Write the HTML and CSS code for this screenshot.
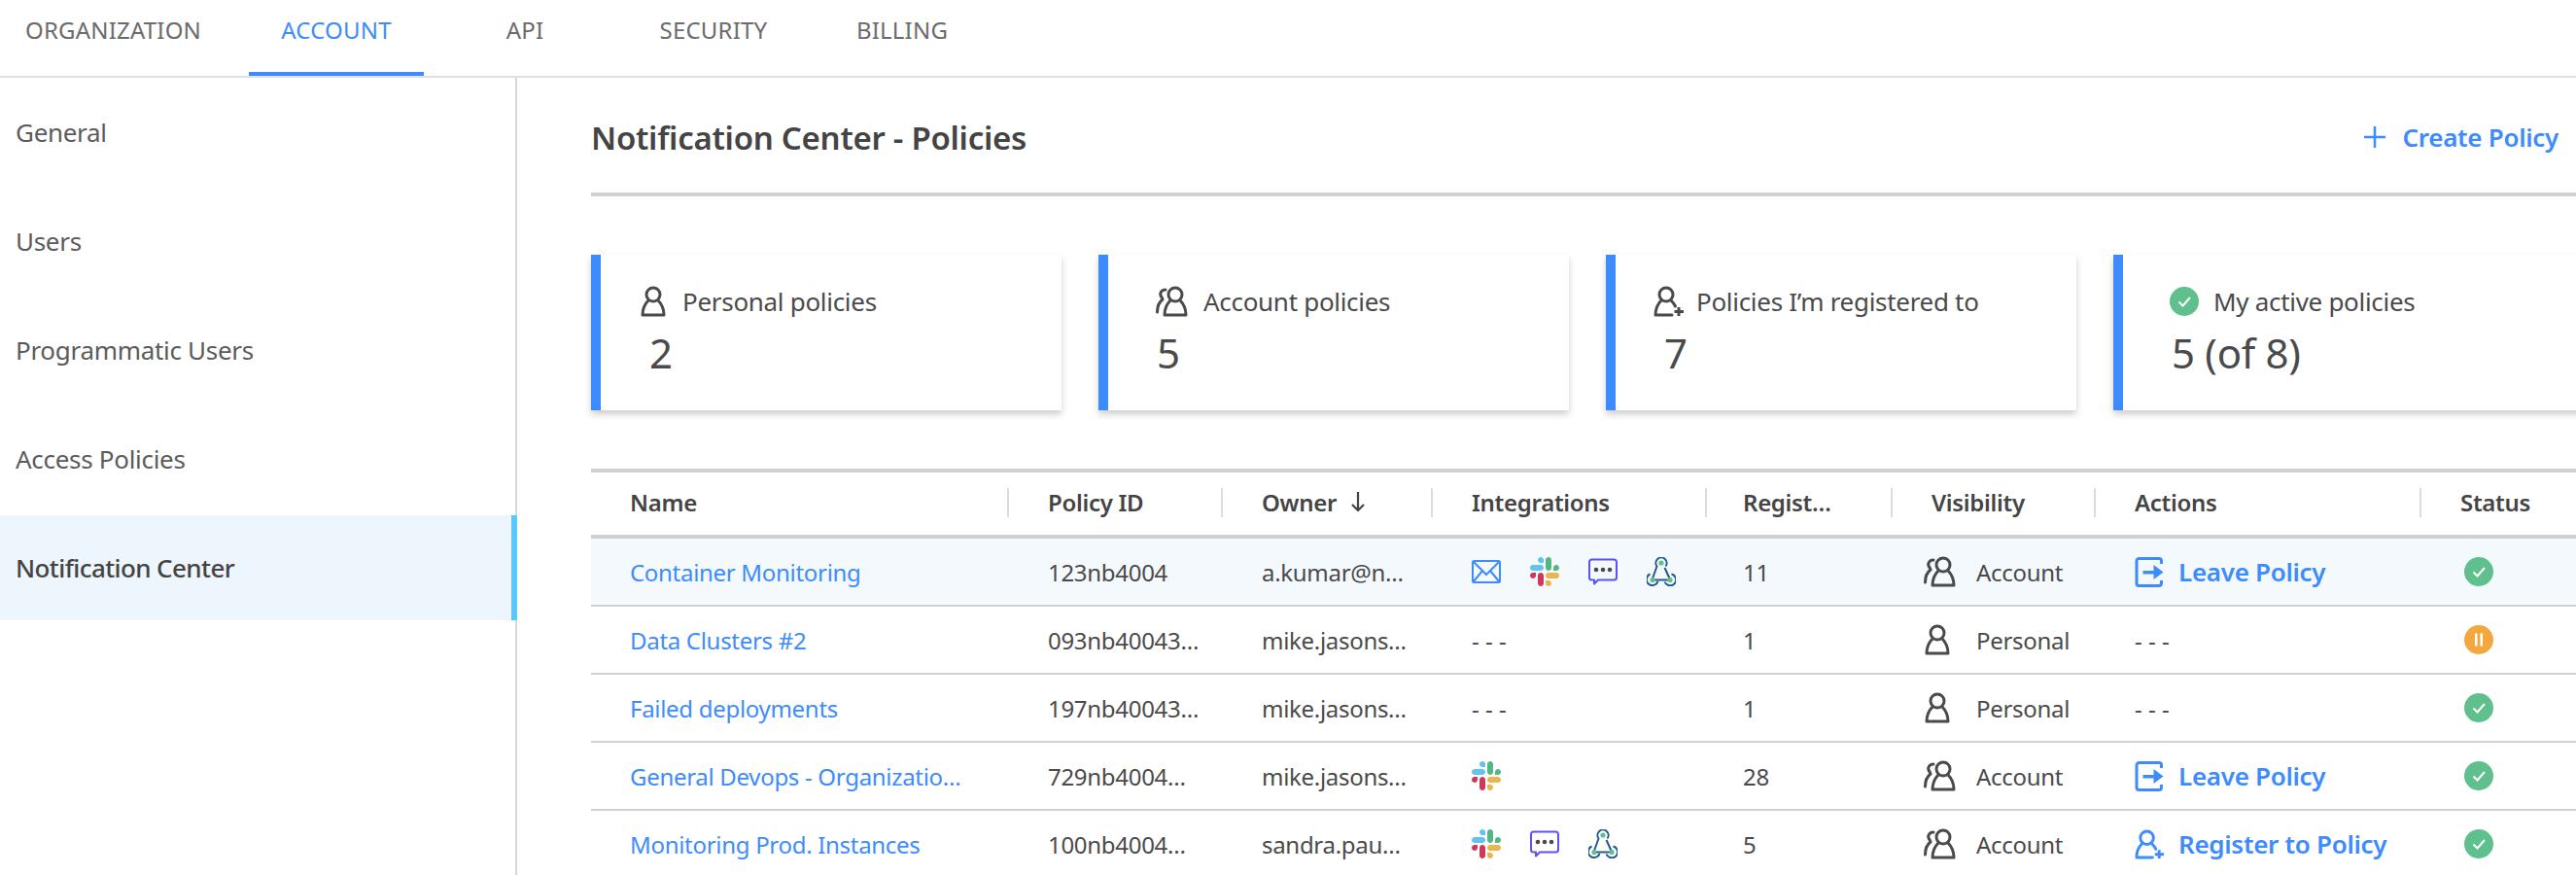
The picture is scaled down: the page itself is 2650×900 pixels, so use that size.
FILE: index.html
```html
<!DOCTYPE html>
<html lang="en">
  <head>
    <meta charset="UTF-8" />
    <title>Notification Center - Policies</title>
    <link rel="stylesheet" href="styles.css">
  </head>
  <body>
    <svg class="defs" width="0" height="0">
      <symbol id="i-person" viewBox="0 0 26 32">
        <circle cx="13" cy="9" r="7" fill="none" stroke="currentColor" stroke-width="3"/>
        <path d="M8 15C5 18 2 23 2 30H24C24 23 21 18 18 15" fill="none" stroke="currentColor" stroke-width="3" stroke-linejoin="round"/>
      </symbol>
      <symbol id="i-account" viewBox="0 0 34 32">
        <circle cx="20" cy="9" r="7" fill="none" stroke="currentColor" stroke-width="3"/>
        <path d="M15 15C12 18 9 23 9 30H31C31 23 28 18 25 15" fill="none" stroke="currentColor" stroke-width="3" stroke-linejoin="round"/>
        <path d="M10 4C6 4 4 7 5 10C6 12 7 13 7 14C3 17 1.500 21 1.500 27" fill="none" stroke="currentColor" stroke-width="3" stroke-linecap="round"/>
      </symbol>
      <symbol id="i-register" viewBox="0 0 32 32">
        <circle cx="13" cy="9" r="7" fill="none" stroke="currentColor" stroke-width="3"/>
        <path d="M8 15C5 18 2 23 2 30H19M18 15C20 17 21.500 19 22.500 21" fill="none" stroke="currentColor" stroke-width="3" stroke-linecap="round" stroke-linejoin="round"/>
        <path d="M26 22V31M21.500 26.500H31" fill="none" stroke="currentColor" stroke-width="3"/>
      </symbol>
      <symbol id="i-leave" viewBox="0 0 30 31">
        <path d="M27 7V4A2.500 2.500 0 0 0 24.500 1.500H4A2.500 2.500 0 0 0 1.500 4V27A2.500 2.500 0 0 0 4 29.500H24.500A2.500 2.500 0 0 0 27 27V24" fill="none" stroke="currentColor" stroke-width="3"/>
        <path d="M8 14H19V8L29 15.500L19 23V17.500H8Z" fill="currentColor"/>
      </symbol>
      <symbol id="i-mail" viewBox="0 0 30 24">
        <rect x="1" y="1" width="28" height="22" rx="1.500" fill="none" stroke="#3d8bfd" stroke-width="2"/>
        <path d="M2 2L15 15L28 2M2 22L11 11M28 22L19 11" fill="none" stroke="#3d8bfd" stroke-width="2"/>
      </symbol>
      <symbol id="i-slack" viewBox="0 0 2447.600 2447.600">
        <path fill="#62c3ec" d="M897.400 0c-135.300.1-244.800 109.900-244.700 245.200-.1 135.300 109.500 245.100 244.800 245.200h244.800V245.300C1142.300 110 1032.700.2 897.400 0c.1 0 .1 0 0 0m0 654H244.800C109.500 654.100-.1 763.900 0 899.200c-.2 135.300 109.400 245.100 244.700 245.300h652.700c135.300-.1 244.900-109.900 244.800-245.200.1-135.400-109.500-245.200-244.800-245.300z"/>
        <path fill="#55b585" d="M2447.600 899.200c.1-135.300-109.500-245.100-244.800-245.200-135.300.1-244.900 109.900-244.800 245.200v245.300h244.800c135.300-.1 244.900-109.900 244.800-245.300zm-652.700 0V245.200C1795 110 1685.500.2 1550.200 0c-135.300.1-244.900 109.900-244.800 245.200v654c-.2 135.300 109.400 245.100 244.700 245.300 135.300-.1 244.900-109.900 244.800-245.300z"/>
        <path fill="#e8b74b" d="M1550.100 2447.600c135.300-.1 244.900-109.900 244.800-245.200.1-135.300-109.500-245.100-244.800-245.200h-244.800v245.200c-.1 135.200 109.500 245 244.800 245.200zm0-654.100h652.700c135.300-.1 244.900-109.900 244.800-245.200.2-135.300-109.400-245.100-244.700-245.300h-652.700c-135.300.1-244.900 109.900-244.800 245.200-.1 135.400 109.400 245.200 244.700 245.300z"/>
        <path fill="#d0385b" d="M0 1548.300c-.1 135.300 109.500 245.100 244.800 245.200 135.300-.1 244.900-109.900 244.800-245.200v-245.200H244.800C109.500 1303.200-.1 1413 0 1548.300zm652.700 0v654c-.2 135.300 109.400 245.100 244.700 245.300 135.300-.1 244.900-109.900 244.800-245.200v-653.900c.2-135.300-109.400-245.100-244.700-245.300-135.400 0-244.900 109.800-244.800 245.100z"/>
      </symbol>
      <symbol id="i-chat" viewBox="0 0 30 27">
        <path d="M3.500 1H26.500A2.500 2.500 0 0 1 29 3.500V19.500A2.500 2.500 0 0 1 26.500 22H10L6 26V22H3.500A2.500 2.500 0 0 1 1 19.500V3.500A2.500 2.500 0 0 1 3.500 1Z" fill="none" stroke="#5b52f5" stroke-width="2" stroke-linejoin="round"/>
        <circle cx="8" cy="11.500" r="2.300" fill="#4a4a4a"/>
        <circle cx="15" cy="11.500" r="2.300" fill="#4a4a4a"/>
        <circle cx="22" cy="11.500" r="2.300" fill="#4a4a4a"/>
      </symbol>
      <symbol id="i-hook" viewBox="0 0 30 30">
        <path d="M24 23L18.500 11M19.500 9.500A5.600 5.600 0 1 0 10.500 9.500L6 22M3.500 17.500A6 6 0 1 0 11.500 25M6 23.500H24M25.500 17.500A6 6 0 1 1 18.500 25.500" fill="none" stroke="#235a8f" stroke-width="2"/>
        <circle cx="15" cy="6" r="2.600" fill="#5fc08d"/>
        <circle cx="6" cy="23.500" r="2.600" fill="#5fc08d"/>
        <circle cx="24" cy="23.500" r="2.600" fill="#5fc08d"/>
      </symbol>
      <symbol id="i-ok" viewBox="0 0 30 30">
        <circle cx="15" cy="15" r="15" fill="#5fc08d"/>
        <path d="M9.500 15.500L13.500 19.500L21 11" fill="none" stroke="#fff" stroke-width="2"/>
      </symbol>
      <symbol id="i-paused" viewBox="0 0 30 30">
        <circle cx="15" cy="15" r="15" fill="#f3a83f"/>
        <path d="M11 8.500H13.500V21.500H11ZM16.500 8.500H19V21.500H16.500Z" fill="#fff"/>
      </symbol>
    </svg>

    <nav class="tabs">
      <a class="tab">ORGANIZATION</a>
      <a class="tab active">ACCOUNT</a>
      <a class="tab">API</a>
      <a class="tab">SECURITY</a>
      <a class="tab">BILLING</a>
    </nav>

    <div class="layout">
      <aside class="sidebar">
        <a class="side-item">General</a>
        <a class="side-item">Users</a>
        <a class="side-item">Programmatic Users</a>
        <a class="side-item">Access Policies</a>
        <a class="side-item active">Notification Center</a>
      </aside>

      <main class="content">
        <div class="page-head">
          <h1>Notification Center - Policies</h1>
          <a class="create-btn">
            <svg class="plus" viewBox="0 0 22 22"><path d="M11 0V22M0 11H22" fill="none" stroke="currentColor" stroke-width="2.500"/></svg>
            Create Policy
          </a>
        </div>

        <div class="cards">
          <div class="card card-personal">
            <div class="card-label"><svg class="card-icon"><use href="#i-person"/></svg>Personal policies</div>
            <div class="card-value">2</div>
          </div>
          <div class="card card-account">
            <div class="card-label"><svg class="card-icon"><use href="#i-account"/></svg>Account policies</div>
            <div class="card-value">5</div>
          </div>
          <div class="card card-registered">
            <div class="card-label"><svg class="card-icon"><use href="#i-register"/></svg>Policies I’m registered to</div>
            <div class="card-value">7</div>
          </div>
          <div class="card card-active">
            <div class="card-label"><svg class="card-icon"><use href="#i-ok"/></svg>My active policies</div>
            <div class="card-value">5 (of 8)</div>
          </div>
        </div>

        <table class="table">
          <colgroup>
            <col class="c-name"><col class="c-id"><col class="c-owner"><col class="c-int"><col class="c-reg"><col class="c-vis"><col class="c-act"><col class="c-status">
          </colgroup>
          <thead>
            <tr>
              <th><div>Name</div></th>
              <th><div>Policy ID</div></th>
              <th><div>Owner <svg class="sort" viewBox="0 0 16 22"><path d="M8 1V20M2 14L8 20L14 14" fill="none" stroke="currentColor" stroke-width="2.200"/></svg></div></th>
              <th><div>Integrations</div></th>
              <th><div>Regist…</div></th>
              <th><div>Visibility</div></th>
              <th><div>Actions</div></th>
              <th><div>Status</div></th>
            </tr>
          </thead>
          <tbody>
            <tr class="hl">
              <td><a class="link">Container Monitoring</a></td>
              <td>123nb4004</td>
              <td>a.kumar@n…</td>
              <td><div class="ints"><svg><use href="#i-mail"/></svg><svg><use href="#i-slack"/></svg><svg><use href="#i-chat"/></svg><svg><use href="#i-hook"/></svg></div></td>
              <td>11</td>
              <td><div class="vis"><svg class="vis-account"><use href="#i-account"/></svg>Account</div></td>
              <td><a class="action"><svg><use href="#i-leave"/></svg>Leave Policy</a></td>
              <td><svg class="status"><use href="#i-ok"/></svg></td>
            </tr>
            <tr>
              <td><a class="link">Data Clusters #2</a></td>
              <td>093nb40043…</td>
              <td>mike.jasons…</td>
              <td><span class="none">- - -</span></td>
              <td>1</td>
              <td><div class="vis"><svg class="vis-personal"><use href="#i-person"/></svg>Personal</div></td>
              <td><span class="none">- - -</span></td>
              <td><svg class="status"><use href="#i-paused"/></svg></td>
            </tr>
            <tr>
              <td><a class="link">Failed deployments</a></td>
              <td>197nb40043…</td>
              <td>mike.jasons…</td>
              <td><span class="none">- - -</span></td>
              <td>1</td>
              <td><div class="vis"><svg class="vis-personal"><use href="#i-person"/></svg>Personal</div></td>
              <td><span class="none">- - -</span></td>
              <td><svg class="status"><use href="#i-ok"/></svg></td>
            </tr>
            <tr>
              <td><a class="link">General Devops - Organizatio…</a></td>
              <td>729nb4004…</td>
              <td>mike.jasons…</td>
              <td><div class="ints"><svg><use href="#i-slack"/></svg></div></td>
              <td>28</td>
              <td><div class="vis"><svg class="vis-account"><use href="#i-account"/></svg>Account</div></td>
              <td><a class="action"><svg><use href="#i-leave"/></svg>Leave Policy</a></td>
              <td><svg class="status"><use href="#i-ok"/></svg></td>
            </tr>
            <tr>
              <td><a class="link">Monitoring Prod. Instances</a></td>
              <td>100nb4004…</td>
              <td>sandra.pau…</td>
              <td><div class="ints"><svg><use href="#i-slack"/></svg><svg><use href="#i-chat"/></svg><svg><use href="#i-hook"/></svg></div></td>
              <td>5</td>
              <td><div class="vis"><svg class="vis-account"><use href="#i-account"/></svg>Account</div></td>
              <td><a class="action"><svg><use href="#i-register"/></svg>Register to Policy</a></td>
              <td><svg class="status"><use href="#i-ok"/></svg></td>
            </tr>
          </tbody>
        </table>
      </main>
    </div>
  </body>
</html>
```

FILE: styles.css
```css
html,
body {
  margin: 0;
  height: 100%;
  overflow: hidden;
}
body {
  font-family: "Noto Sans", Arial, sans-serif;
  font-size: 24px;
  letter-spacing: -0.3px;
  color: #4a4a4a;
  background-color: #fff;
}
.defs {
  position: absolute;
}

/* tabs */
.tabs {
  display: flex;
  height: 80px;
  box-sizing: border-box;
  border-bottom: 2px solid #dfdfe1;
}
.tab {
  width: 180px;
  height: 78px;
  box-sizing: border-box;
  margin-right: 14px;
  line-height: 62px;
  text-align: center;
  letter-spacing: 0.2px;
  color: #6b6b6b;
}
.tab:first-child {
  width: 233px;
  margin-right: 23px;
}
.tab.active {
  color: #3d8bfd;
  border-bottom: 4px solid #3d8bfd;
}

.layout {
  display: flex;
  height: 820px;
}

/* sidebar */
.sidebar {
  flex: none;
  width: 530px;
  padding-top: 2px;
  border-right: 2px solid #d8d8dc;
}
.side-item {
  display: block;
  height: 108px;
  margin-bottom: 4px;
  padding-left: 16px;
  font-size: 26px;
  line-height: 108px;
  color: #5b5b5b;
}
.side-item.active {
  margin-right: -2px;
  border-right: 6px solid #5ac8fa;
  background-color: #edf5fd;
  font-weight: 500;
  letter-spacing: -0.6px;
  color: #444;
}

/* main */
.content {
  flex: 1;
  min-width: 0;
  padding-left: 76px;
  overflow: hidden;
}
.page-head {
  display: flex;
  justify-content: space-between;
  align-items: center;
  height: 114px;
  padding: 4px 18px 0 0;
  border-bottom: 4px solid #cfd0d2;
}
.page-head h1 {
  margin: 0;
  font-size: 33px;
  font-weight: 600;
  letter-spacing: -0.28px;
  color: #444;
}
.create-btn {
  display: flex;
  align-items: center;
  font-size: 26px;
  font-weight: 600;
  color: #3d8bfd;
}
.plus {
  width: 22px;
  height: 22px;
  margin-right: 18px;
}

/* cards */
.cards {
  display: flex;
  gap: 38px;
  margin-top: 60px;
}
.card {
  flex: none;
  width: 484px;
  height: 160px;
  box-sizing: border-box;
  padding-top: 30px;
  border-left: 10px solid #3d8bfd;
  background-color: #fff;
  box-shadow: 0 4px 7px rgba(0, 0, 0, 0.2);
}
.card-label {
  display: flex;
  align-items: center;
  height: 36px;
  font-size: 26px;
}
.card-icon {
  flex: none;
  height: 32px;
}
.card-personal .card-icon {
  width: 26px;
  margin: 0 17px 0 41px;
}
.card-account .card-icon {
  width: 34px;
  margin: 0 15px 0 49px;
}
.card-registered .card-icon {
  width: 32px;
  margin: 0 12px 0 39px;
}
.card-active .card-icon {
  width: 30px;
  margin: 0 15px 0 48px;
}
.card-value {
  margin-top: 9px;
  padding-left: 50px;
  font-size: 42px;
  line-height: 52px;
}

/* table */
.table {
  width: 2042px;
  margin-top: 60px;
  table-layout: fixed;
  border-collapse: separate;
  border-spacing: 0;
  border-top: 4px solid #cfd0d2;
}
.c-name { width: 430px; }
.c-id { width: 220px; }
.c-owner { width: 216px; }
.c-int { width: 282px; }
.c-reg { width: 191px; }
.c-vis { width: 209px; }
.c-act { width: 335px; }
.c-status { width: 159px; }
.table th {
  box-sizing: border-box;
  height: 68px;
  padding: 0 0 2px;
  border-bottom: 4px solid #cfd0d2;
  font-weight: 600;
  text-align: left;
  color: #444;
}
.table th div {
  display: flex;
  align-items: center;
  height: 28px;
  padding: 0 0 2px 40px;
  border-right: 2px solid #dcdcde;
}
.table th:last-child div {
  border-right: 0;
}
.table td {
  box-sizing: border-box;
  height: 70px;
  padding: 0 0 0 40px;
  border-bottom: 2px solid #cfd0d2;
  white-space: nowrap;
  overflow: hidden;
}
.table td:nth-child(5),
.table th:nth-child(5) div {
  padding-left: 37px;
}
.table tr.hl td {
  background-color: #f4f9fd;
}
.sort {
  width: 16px;
  height: 22px;
  margin-left: 14px;
}
.link {
  color: #3d8bfd;
}
.none {
  letter-spacing: 0;
}
.ints {
  display: flex;
  gap: 30px;
  align-items: center;
}
.ints svg {
  width: 30px;
  height: 30px;
}
.vis {
  display: flex;
  align-items: center;
}
.vis svg {
  flex: none;
  height: 32px;
}
.vis-account {
  width: 34px;
  margin: 0 20px 0 -8px;
}
.vis-personal {
  width: 26px;
  margin: 0 27px 0 -7px;
}
.action {
  display: flex;
  align-items: center;
  font-size: 26px;
  font-weight: 600;
  color: #3d8bfd;
}
.action svg {
  flex: none;
  width: 31px;
  height: 31px;
  margin-right: 14px;
}
.status {
  display: block;
  width: 30px;
  height: 30px;
  margin-left: 4px;
}
```
